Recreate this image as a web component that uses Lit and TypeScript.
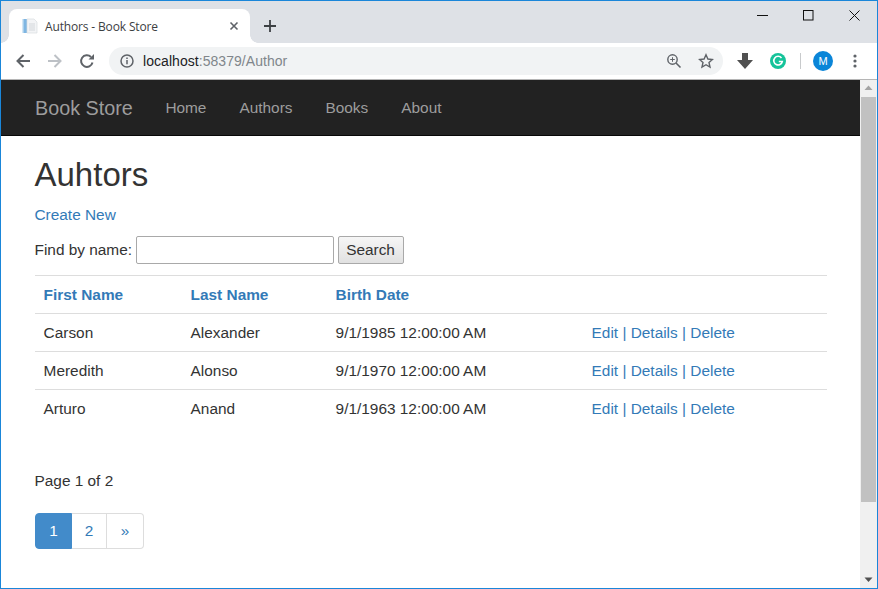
import { LitElement, html, css } from "lit";
import { customElement } from "lit/decorators.js";

const rows = [
  ["Carson", "Alexander", "9/1/1985 12:00:00 AM"],
  ["Meredith", "Alonso", "9/1/1970 12:00:00 AM"],
  ["Arturo", "Anand", "9/1/1963 12:00:00 AM"],
];

@customElement("app-root")
export class AppRoot extends LitElement {
  static styles = css`
    :host { display: block; width: 878px; height: 589px; overflow: hidden; }
    * { box-sizing: border-box; }
    .window { width: 878px; height: 589px; border: 1px solid #1a86d9; display: flex; flex-direction: column; background: #fff; font-family: "Liberation Sans", Arial, sans-serif; overflow: hidden; }
    .strip { height: 42px; flex: none; background: #dee1e6; display: flex; align-items: flex-end; padding-left: 8px; position: relative; }
    .tab { width: 241px; height: 34px; background: #fff; border-radius: 8px 8px 0 0; display: flex; align-items: center; padding: 0 0 0 13px; position: relative; }
    .tab::before, .tab::after { content: ""; position: absolute; bottom: 0; width: 8px; height: 8px; background: radial-gradient(circle at 0 0, #dee1e6 7.5px, #fff 8px); }
    .tab::before { left: -8px; }
    .tab::after { right: -8px; background: radial-gradient(circle at 100% 0, #dee1e6 7.5px, #fff 8px); }
    .tab-title { font: 12px "Open Sans", sans-serif; color: #3c4043; margin-left: 7px; flex: 1; white-space: nowrap; letter-spacing: -0.15px; }
    .tab-close { margin-right: 11px; display: block; }
    .new-tab { margin: 0 0 10px 13px; display: block; }
    .controls { margin-left: auto; align-self: flex-start; display: flex; }
    .ctl { width: 46px; height: 28px; display: flex; align-items: center; justify-content: center; }
    .toolbar { height: 36px; flex: none; background: #fff; display: flex; align-items: center; padding-left: 14px; }
    .nav-group { display: flex; gap: 16px; }
    .nav-ic { display: block; }
    .omni { margin-left: 14px; width: 614px; height: 28px; border-radius: 14px; background: #f1f3f4; display: flex; align-items: center; padding: 0 9px 0 11px; }
    .url { margin-left: 9px; font-size: 14px; color: #80868b; flex: 1; font-family: "Liberation Sans", sans-serif; letter-spacing: 0.05px; }
    .url b { font-weight: 400; color: #202124; }
    .omni svg { display: block; }
    .zoom-ic { margin-right: 16px; }
    .tools { display: flex; align-items: center; }
    .tool-download { margin-left: 14px; }
    .tool-grammarly { margin-left: 17px; }
    .tool-sep { margin-left: 14px; width: 1px; height: 16px; background: #c8cacc; }
    .tool-profile { margin-left: 12px; }
    .tool-menu { margin-left: 20px; }
    .rule { height: 1px; background: #b5b5b5; flex: none; }
    .viewport { flex: 1; display: flex; min-height: 0; }
    .page { flex: 1; min-width: 0; color: #333; font-size: 15.4px; line-height: 22px; }
    .navbar { height: 56px; background: #222; border-bottom: 1px solid #080808; display: flex; align-items: center; padding-left: 34px; }
    .brand { font-size: 19.8px; color: #9d9d9d; margin-right: 32.5px; }
    .navbar a { color: #9d9d9d; margin-right: 33px; text-decoration: none; }
    .content { padding: 0 33px 0 33.5px; }
    h2 { font-size: 33px; font-weight: 500; line-height: 36px; margin: 21px 0 0; color: #333; }
    a { color: #337ab7; text-decoration: none; }
    .create { display: block; margin-top: 11px; }
    .find { display: flex; align-items: center; margin-top: 10px; height: 28px; white-space: pre; }
    .input { width: 198px; height: 28px; margin-left: 3.5px; border: 1px solid #a9a9a9; border-radius: 2px; background: #fff; display: block; padding: 0; }
    .btn { width: 66px; height: 28px; margin-left: 4px; border: 1px solid #a9a9a9; border-radius: 2px; background: linear-gradient(#f6f6f6, #e1e1e1); font: 15.4px "Liberation Sans", sans-serif; color: #333; padding: 0; }
    table { width: 792px; margin: 11px 0 0 .5px; border-collapse: collapse; table-layout: fixed; color: #333; font-size: 15.4px; }
    th, td { height: 38px; padding: 0 0 0 8.6px; text-align: left; vertical-align: middle; border-top: 1px solid #ddd; font-weight: 400; }
    th { font-weight: 700; }
    td.actions { color: #337ab7; }
    .count { margin: 42px 0 0; }
    .pager { display: flex; margin: 21px 0 0 .5px; width: 109px; height: 36px; }
    .pager a { display: flex; align-items: center; justify-content: center; height: 36px; border: 1px solid #ddd; border-left: 0; }
    .pager a:first-child { background: #428bca; border: 1px solid #428bca; color: #fff; border-radius: 4px 0 0 4px; width: 37px; }
    .pager a:nth-child(2) { width: 35px; }
    .pager a:last-child { width: 37px; border-radius: 0 4px 4px 0; }
    .scroll { width: 17px; flex: none; background: #f0f0f0; display: flex; flex-direction: column; align-items: center; }
    .arrow { height: 17px; flex: none; display: block; }
    .thumb { width: 15px; height: 405px; background: #c1c1c1; flex: none; }
    .track { flex: 1; }
  `;

  render() {
    return html`
      <div class="window">
        <div class="strip">
          <div class="tab">
            <svg width="16" height="16" viewBox="0 0 16 16">
              <rect x="0.5" y="1" width="4.500" height="14" fill="#a9cfec"/>
              <rect x="2" y="1" width="3" height="14" fill="#7fb6e2"/>
              <path d="M5 1h7l3 3v11H5z" fill="#f3f4f6" stroke="#d8dce0" stroke-width=".7"/>
              <path d="M7 6h6M7 8h6M7 10h6M7 12h6" stroke="#d3d7db" stroke-width="1"/>
            </svg>
            <span class="tab-title">Authors - Book Store</span>
            <svg class="tab-close" width="10" height="10" viewBox="0 0 10 10"><path d="M1.500 1.500l7 7M8.500 1.500l-7 7" stroke="#5f6368" stroke-width="1.600"/></svg>
          </div>
          <svg class="new-tab" width="14" height="14" viewBox="0 0 14 14"><path d="M7 1v12M1 7h12" stroke="#3c4043" stroke-width="1.800"/></svg>
          <div class="controls">
            <div class="ctl"><svg width="11" height="11" viewBox="0 0 11 11"><path d="M0 5.500h11" stroke="#111" stroke-width="1"/></svg></div>
            <div class="ctl"><svg width="11" height="11" viewBox="0 0 11 11"><rect x=".5" y=".5" width="9.500" height="9.500" fill="none" stroke="#111"/></svg></div>
            <div class="ctl"><svg width="11" height="11" viewBox="0 0 11 11"><path d="M.5.500l10 10M10.500.500l-10 10" stroke="#111" stroke-width="1"/></svg></div>
          </div>
        </div>
        <div class="toolbar">
          <div class="nav-group">
            <svg class="nav-ic" width="16" height="16" viewBox="0 0 16 16"><path d="M15 8H2.500M8.500 2L2.500 8l6 6" fill="none" stroke="#5f6368" stroke-width="2"/></svg>
            <svg class="nav-ic" width="16" height="16" viewBox="0 0 16 16"><path d="M1 8h12.500M7.500 2l6 6-6 6" fill="none" stroke="#bdc1c6" stroke-width="2"/></svg>
            <svg class="nav-ic" width="16" height="16" viewBox="0 0 16 16"><path d="M13.500 9.500A5.800 5.800 0 1 1 12 4" fill="none" stroke="#5f6368" stroke-width="2"/><path d="M9.500 6.500H15V1z" fill="#5f6368"/></svg>
          </div>
          <div class="omni">
            <svg width="14" height="14" viewBox="0 0 14 14"><circle cx="7" cy="7" r="6" fill="none" stroke="#5f6368" stroke-width="1.500"/><path d="M7 6v4.200M7 3.500v1.500" stroke="#5f6368" stroke-width="1.500"/></svg>
            <span class="url"><b>localhost</b>:58379/Author</span>
            <svg class="zoom-ic" width="16" height="16" viewBox="0 0 16 16"><circle cx="6.500" cy="6.500" r="4.700" fill="none" stroke="#5f6368" stroke-width="1.400"/><path d="M10 10l4.500 4.500" stroke="#5f6368" stroke-width="1.600"/><path d="M6.500 4.200v4.600M4.200 6.500h4.600" stroke="#5f6368"/></svg>
            <svg width="16" height="16" viewBox="0 0 16 16"><path d="M8 1.800l1.900 4.200 4.500.5-3.400 3 1 4.500L8 11.700 4 14l1-4.500-3.400-3 4.500-.5z" fill="none" stroke="#5f6368" stroke-width="1.400"/></svg>
          </div>
          <div class="tools">
            <svg class="tool-download" width="16" height="16" viewBox="0 0 16 16"><path d="M5 0h6v7h5l-8 9-8-9h5z" fill="#505050"/></svg>
            <svg class="tool-grammarly" width="16" height="16" viewBox="0 0 16 16"><circle cx="8" cy="8" r="8" fill="#15c39a"/><path d="M11.500 5A4.300 4.300 0 1 0 12.300 8.500H8.800" fill="none" stroke="#fff" stroke-width="1.600"/></svg>
            <div class="tool-sep"></div>
            <svg class="tool-profile" width="20" height="20" viewBox="0 0 20 20"><circle cx="10" cy="10" r="10" fill="#0a85d8"/><text x="10" y="14" text-anchor="middle" font-family="Liberation Sans" font-size="11" fill="#fff">M</text></svg>
            <svg class="tool-menu" width="4" height="14" viewBox="0 0 4 14"><circle cx="2" cy="2" r="1.600" fill="#5f6368"/><circle cx="2" cy="7" r="1.600" fill="#5f6368"/><circle cx="2" cy="12" r="1.600" fill="#5f6368"/></svg>
          </div>
        </div>
        <div class="rule"></div>
        <div class="viewport">
          <div class="page">
            <div class="navbar">
              <span class="brand">Book Store</span>
              <a href="#">Home</a><a href="#">Authors</a><a href="#">Books</a><a href="#">About</a>
            </div>
            <div class="content">
              <h2>Auhtors</h2>
              <a class="create" href="#">Create New</a>
              <div class="find"><span>Find by name:</span><input class="input" /><button class="btn">Search</button></div>
              <table>
                <colgroup><col style="width:147px"/><col style="width:145px"/><col style="width:256px"/><col/></colgroup>
                <thead><tr><th><a href="#">First Name</a></th><th><a href="#">Last Name</a></th><th><a href="#">Birth Date</a></th><th></th></tr></thead>
                <tbody>
                  ${rows.map(r => html`<tr><td>${r[0]}</td><td>${r[1]}</td><td>${r[2]}</td><td class="actions"><a href="#">Edit</a> | <a href="#">Details</a> | <a href="#">Delete</a></td></tr>`)}
                </tbody>
              </table>
              <p class="count">Page 1 of 2</p>
              <div class="pager"><a href="#">1</a><a href="#">2</a><a href="#">»</a></div>
            </div>
          </div>
          <div class="scroll">
            <svg class="arrow" width="17" height="17" viewBox="0 0 17 17"><path d="M8.500 5.500l4 4.500h-8z" fill="#a3a3a3"/></svg>
            <div class="thumb"></div>
            <div class="track"></div>
            <svg class="arrow" width="17" height="17" viewBox="0 0 17 17"><path d="M8.500 11l-4-4.500h8z" fill="#505050"/></svg>
          </div>
        </div>
      </div>
    `;
  }
}
